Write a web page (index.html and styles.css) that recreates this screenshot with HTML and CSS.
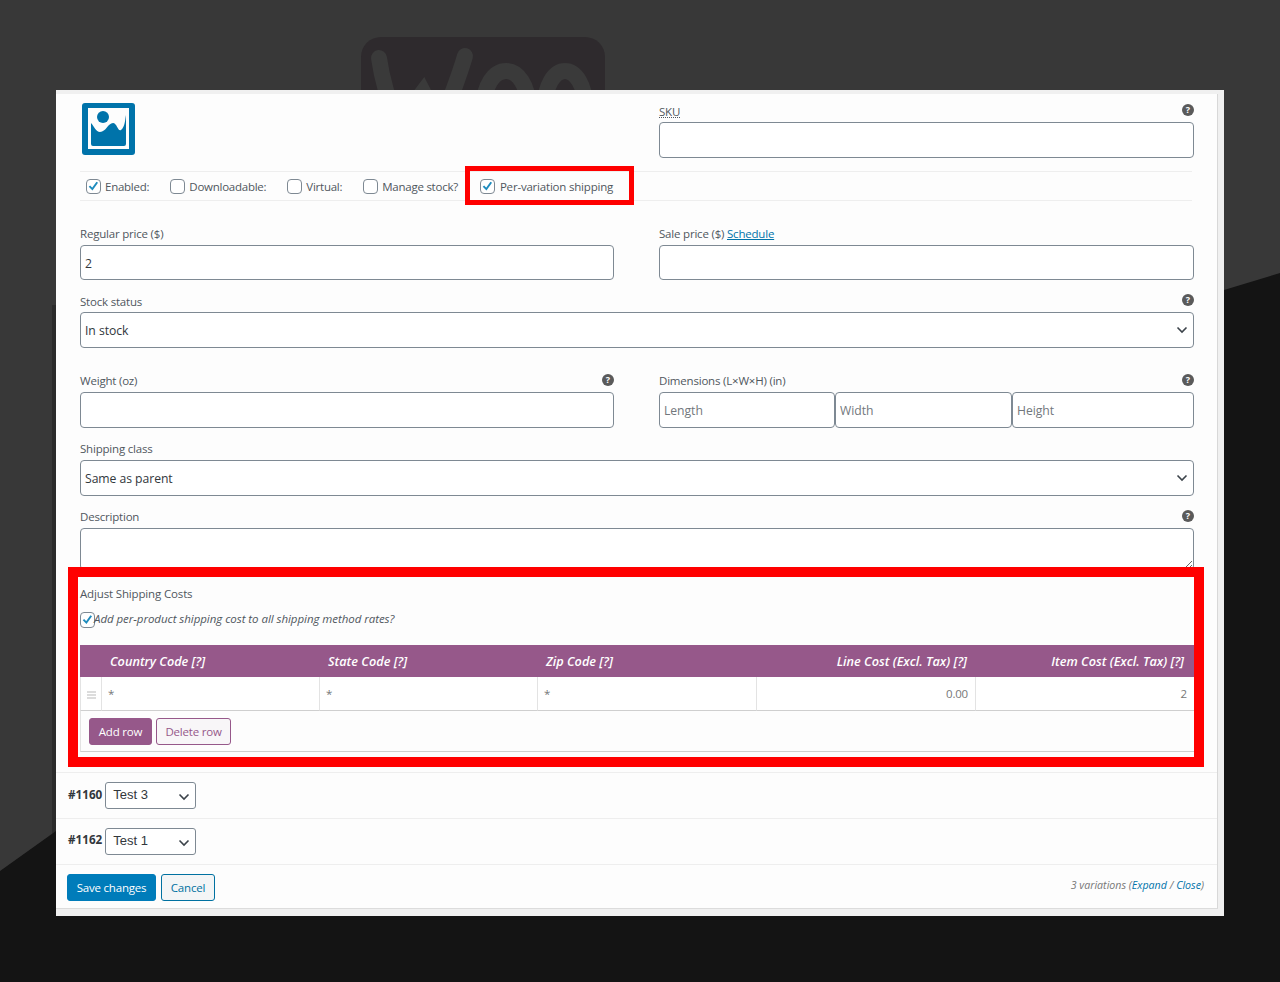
FILE: index.html
```html
<!DOCTYPE html>
<html lang="en">
<head>
<meta charset="utf-8">
<title>Variation shipping settings</title>
<link rel="stylesheet" href="styles.css">
</head>
<body>
<div class="stage">
  <svg class="backdrop" width="1280" height="982" viewBox="0 0 1280 982" aria-hidden="true">
    <rect class="bd-base" width="1280" height="982"/>
    <rect class="bd-logo" x="361" y="37" width="244" height="120" rx="20"/>
    <g class="bd-woo">
      <path d="M379 58 C382 80 390 105 398 125 M398 125 L423 92 L440 125 M440 125 C450 100 458 80 465 56"/>
      <ellipse cx="506" cy="105" rx="22" ry="34"/>
      <ellipse cx="565" cy="105" rx="20" ry="34"/>
    </g>
    <rect class="bd-edge" x="52" y="305" width="4" height="530"/>
    <polygon class="bd-dark" points="0,982 0,871 56,831 56,835 1224,290 1280,273 1280,982"/>
  </svg>

  <div class="window">
    <div class="panel">
      <section class="variation">
        <div class="head two-col">
          <div class="thumb">
            <svg width="53" height="52" viewBox="0 0 53 52">
              <rect width="53" height="52" rx="3" fill="#0073aa"/>
              <rect x="6" y="5" width="41" height="41" fill="#fdfdfd"/>
              <path fill="#0073aa" d="M9 20 C12 23 14 29 18 29 C24 29 26 20 31 20 C35 20 36 29 39 27 C43 24 43 17 44 12 V41 Q44 43 42 43 H11 Q9 43 9 41 Z"/>
              <circle cx="21" cy="14" r="6" fill="#0073aa"/>
            </svg>
          </div>
          <div class="field">
            <div class="label-row"><label class="sku">SKU</label><span class="help">?</span></div>
            <input class="text-input" type="text">
          </div>
        </div>

        <div class="options">
          <label class="opt"><span class="cb"><svg viewBox="0 0 16 16" width="14" height="14"><path d="M3 8.2 L6.6 11.8 L12.6 3.4" /></svg></span>Enabled:</label>
          <label class="opt"><span class="cb"></span>Downloadable:</label>
          <label class="opt"><span class="cb"></span>Virtual:</label>
          <label class="opt"><span class="cb"></span>Manage stock?</label>
          <label class="opt opt-last"><span class="cb"><svg viewBox="0 0 16 16" width="14" height="14"><path d="M3 8.2 L6.6 11.8 L12.6 3.4" /></svg></span>Per-variation shipping</label>
        </div>

        <div class="two-col price-row">
          <div class="field">
            <div class="label-row"><label>Regular price ($)</label></div>
            <input class="text-input h35" type="text" value="2">
          </div>
          <div class="field">
            <div class="label-row"><label>Sale price ($) <a href="#">Schedule</a></label></div>
            <input class="text-input h35" type="text">
          </div>
        </div>

        <div class="field row-gap">
          <div class="label-row"><label class="low">Stock status</label><span class="help">?</span></div>
          <div class="select-wrap">
            <select class="select-input"><option>In stock</option></select>
            <svg class="chev" width="12" height="8" viewBox="0 0 12 8"><path d="M1.5 1.5 L6 6 L10.5 1.5"/></svg>
          </div>
        </div>

        <div class="two-col row-gap-lg">
          <div class="field">
            <div class="label-row"><label>Weight (oz)</label><span class="help">?</span></div>
            <input class="text-input" type="text">
          </div>
          <div class="field">
            <div class="label-row"><label>Dimensions (L×W×H) (in)</label><span class="help">?</span></div>
            <div class="dims">
              <input class="text-input" type="text" placeholder="Length">
              <input class="text-input" type="text" placeholder="Width">
              <input class="text-input" type="text" placeholder="Height">
            </div>
          </div>
        </div>

        <div class="field row-gap">
          <div class="label-row"><label>Shipping class</label></div>
          <div class="select-wrap">
            <select class="select-input"><option>Same as parent</option></select>
            <svg class="chev" width="12" height="8" viewBox="0 0 12 8"><path d="M1.5 1.5 L6 6 L10.5 1.5"/></svg>
          </div>
        </div>

        <div class="field row-gap">
          <div class="label-row"><label>Description</label><span class="help">?</span></div>
          <textarea class="text-area"></textarea>
        </div>

        <div class="shipping">
          <h4 class="ship-title">Adjust Shipping Costs</h4>
          <label class="ship-check"><span class="cb tight"><svg viewBox="0 0 16 16" width="15" height="15"><path d="M3 8.2 L6.6 11.8 L12.6 3.4" /></svg></span>Add per-product shipping cost to all shipping method rates?</label>
          <table class="rates">
            <colgroup>
              <col class="c-handle"><col class="c-a"><col class="c-a"><col class="c-b"><col class="c-b"><col>
            </colgroup>
            <thead>
              <tr>
                <th></th>
                <th>Country Code [?]</th>
                <th>State Code [?]</th>
                <th>Zip Code [?]</th>
                <th class="num">Line Cost (Excl. Tax) [?]</th>
                <th class="num last">Item Cost (Excl. Tax) [?]</th>
              </tr>
            </thead>
            <tbody>
              <tr>
                <td class="handle"><span class="grip"></span></td>
                <td>*</td>
                <td>*</td>
                <td>*</td>
                <td class="num">0.00</td>
                <td class="num">2</td>
              </tr>
            </tbody>
            <tfoot>
              <tr>
                <td colspan="6">
                  <div class="table-actions">
                    <button class="btn btn-purple" type="button">Add row</button>
                    <button class="btn btn-purple-outline" type="button">Delete row</button>
                  </div>
                </td>
              </tr>
            </tfoot>
          </table>
        </div>
      </section>

      <div class="var-row">
        <strong>#1160</strong>
        <div class="select-wrap small">
          <select class="select-small"><option>Test 3</option></select>
          <svg class="chev" width="12" height="8" viewBox="0 0 12 8"><path d="M1.5 1.5 L6 6 L10.5 1.5"/></svg>
        </div>
      </div>
      <div class="var-row">
        <strong class="raised">#1162</strong>
        <div class="select-wrap small">
          <select class="select-small"><option>Test 1</option></select>
          <svg class="chev" width="12" height="8" viewBox="0 0 12 8"><path d="M1.5 1.5 L6 6 L10.5 1.5"/></svg>
        </div>
      </div>

      <footer class="foot">
        <div class="foot-actions">
          <button class="btn btn-blue" type="button">Save changes</button>
          <button class="btn btn-blue-outline" type="button">Cancel</button>
        </div>
        <em class="count">3 variations (<a href="#">Expand</a> / <a href="#">Close</a>)</em>
      </footer>
    </div>
  </div>

  <div class="mark mark-small"></div>
  <div class="mark mark-large"></div>
</div>
</body>
</html>
```

FILE: styles.css
```css
* { box-sizing: border-box; }

html, body { margin: 0; padding: 0; }

body {
  background: #141414;
  font-family: "Open Sans", "Liberation Sans", sans-serif;
  font-size: 11.5px;
  letter-spacing: -0.2px;
  color: #50575e;
}

.stage {
  position: relative;
  width: 1280px;
  height: 982px;
  overflow: hidden;
  padding: 90px 56px 66px;
}

.backdrop { position: absolute; left: 0; top: 0; }
.bd-base { fill: #383838; }
.bd-logo { fill: #2e2a2d; }
.bd-woo { fill: none; stroke: #3a3a3a; stroke-width: 16; stroke-linecap: round; }
.bd-edge { fill: #2b2b2b; }
.bd-dark { fill: #141414; }

.window {
  position: relative;
  width: 1168px;
  height: 826px;
  background: #f0f0f0;
  padding: 4px 6px 7px 0;
}

.panel {
  height: 100%;
  background: #fdfdfd;
  border-right: 1px solid #d8d8d8;
  border-bottom: 1px solid #dcdcdc;
}

.variation { padding: 10px 23px 20px 24px; }

.two-col {
  display: grid;
  grid-template-columns: 534px 535px;
  column-gap: 45px;
}

.thumb { margin: -1px 0 0 2px; height: 52px; }
.thumb svg { display: block; }

.label-row {
  display: flex;
  justify-content: space-between;
  align-items: flex-start;
  height: 18px;
  line-height: 14px;
  white-space: nowrap;
}
.label-row a { color: #0073aa; text-decoration: underline; }
.low { margin-top: 1px; }
.sku { margin-top: 1px; text-decoration: underline dotted; }

.help {
  width: 12px;
  height: 12px;
  margin: 0;
  border-radius: 50%;
  background: #5a5a5a;
  color: #fff;
  font: 700 9px/12px "Open Sans", sans-serif;
  letter-spacing: 0;
  text-align: center;
}

.text-input,
.text-area,
.select-input {
  display: block;
  width: 100%;
  height: 36px;
  padding: 1px 4px 0;
  background: #fff;
  border: 1px solid #7e8993;
  border-radius: 4px;
  font: 12.2px "Open Sans", sans-serif;
  letter-spacing: -0.05px;
  color: #32373c;
  outline: 0;
}
.text-input::placeholder { color: #72777c; opacity: 1; }
.h35 { height: 35px; }
.text-area { height: 42px; resize: vertical; }
.select-input { appearance: none; padding-top: 0; }

.select-wrap { position: relative; }
.chev {
  position: absolute;
  right: 6px;
  top: 14px;
  fill: none;
  stroke: #3c434a;
  stroke-width: 1.6;
  pointer-events: none;
}

.options {
  display: flex;
  align-items: center;
  gap: 21px;
  width: 1112px;
  height: 30px;
  margin-top: 13px;
  padding: 0 0 0 6px;
  border-top: 1px solid #eeeeee;
  border-bottom: 1px solid #eeeeee;
  letter-spacing: -0.25px;
}
.opt { display: flex; align-items: center; gap: 4px; white-space: nowrap; }
.opt-last { gap: 5px; margin-left: 1px; letter-spacing: -0.2px; }

.cb {
  display: flex;
  align-items: center;
  justify-content: center;
  flex: none;
  width: 15px;
  height: 15px;
  background: #fff;
  border: 1px solid #7e8993;
  border-radius: 4px;
}
.cb svg { fill: none; stroke: #1e8cbe; stroke-width: 2.4; }
.cb.tight { width: 15px; height: 16px; margin: 3px -1px 0 0; }

.price-row { margin-top: 26px; }
.row-gap { margin-top: 14px; }
.row-gap-lg { margin-top: 26px; }

.dims { display: grid; grid-template-columns: 176px 177px 182px; }

.shipping { padding-top: 15px; width: 1114px; }
.ship-title {
  margin: 0;
  height: 18px;
  font-size: 11.5px;
  line-height: 18px;
  font-weight: 400;
  letter-spacing: -0.15px;
}
.ship-check {
  display: flex;
  align-items: center;
  height: 16px;
  margin-top: 7px;
  font-style: italic;
  letter-spacing: -0.05px;
}

.rates {
  width: 100%;
  margin-top: 19px;
  border-collapse: separate;
  border-spacing: 0;
  table-layout: fixed;
}
.c-handle { width: 22px; }
.c-a { width: 218px; }
.c-b { width: 219px; }

.rates th {
  height: 32px;
  padding: 0 9px 0 8px;
  background: #96588a;
  color: #fff;
  font-size: 12.7px;
  font-style: italic;
  font-weight: 600;
  letter-spacing: 0;
  text-align: left;
}
.rates th.num { text-align: right; }
.rates th.last { padding-right: 10px; }
.rates tbody td {
  height: 34px;
  padding: 0 7px 0 6px;
  background: #fff;
  border-right: 1px solid #e3e3e3;
  border-bottom: 1px solid #cfcfcf;
  color: #777;
}
.rates tbody td:last-child { border-right: 0; }
.rates td.num { text-align: right; }
.rates td.handle { padding: 0; border-left: 1px solid #e3e3e3; text-align: center; }
.grip {
  display: inline-block;
  width: 9px;
  height: 8px;
  vertical-align: middle;
  border-top: 2px solid #dcdcdc;
  border-bottom: 2px solid #dcdcdc;
  background: linear-gradient(#dcdcdc, #dcdcdc) center / 100% 2px no-repeat;
}
.rates tfoot td {
  height: 41px;
  padding: 0;
  border-left: 1px solid #e3e3e3;
  border-bottom: 1px solid #cfcfcf;
}
.table-actions { display: flex; gap: 4px; padding: 1px 0 0 8px; }

.btn {
  height: 27px;
  padding: 0;
  border-radius: 3px;
  font: 11.5px "Open Sans", sans-serif;
  letter-spacing: -0.2px;
  white-space: nowrap;
}
.btn-purple { background: #96588a; border: 1px solid #96588a; color: #fff; width: 63px; }
.btn-purple-outline { background: #f8f6f8; border: 1px solid #96588a; color: #96588a; width: 75px; }
.btn-blue { background: #007cba; border: 1px solid #007cba; color: #fff; width: 89px; }
.btn-blue-outline { background: #f3f5f6; border: 1px solid #0071a1; color: #0071a1; width: 54px; }

.var-row {
  display: flex;
  align-items: flex-start;
  gap: 3px;
  height: 46px;
  padding: 9px 0 0 12px;
  border-top: 1px solid #eeeeee;
}
.var-row strong { margin-top: 4px; color: #32373c; line-height: 16px; font-size: 11.7px; letter-spacing: 0; }
.var-row strong.raised { margin-top: 3px; }

.select-wrap.small { width: 91px; }
.select-wrap.small .chev { top: 11px; right: 6px; }
.select-small {
  display: block;
  width: 100%;
  height: 27px;
  padding: 0 7px 2px;
  appearance: none;
  background: #fff;
  border: 1px solid #7e8993;
  border-radius: 3px;
  font: 13px "Liberation Sans", Arial, sans-serif;
  letter-spacing: 0;
  color: #32373c;
}

.foot {
  display: flex;
  justify-content: space-between;
  align-items: flex-start;
  height: 44px;
  padding: 9px 13px 0 11px;
  border-top: 1px solid #eeeeee;
}
.foot-actions { display: flex; gap: 5px; }
.count { margin-top: 4px; font-size: 10.65px; letter-spacing: 0; color: #777; white-space: nowrap; }
.count a { color: #0073aa; text-decoration: none; }

.mark { position: absolute; border-style: solid; border-color: #ff0000; pointer-events: none; }
.mark-small { left: 465px; top: 166px; width: 169px; height: 39px; border-width: 5px; }
.mark-large { left: 68px; top: 567px; width: 1136px; height: 200px; border-width: 10px; }
```
